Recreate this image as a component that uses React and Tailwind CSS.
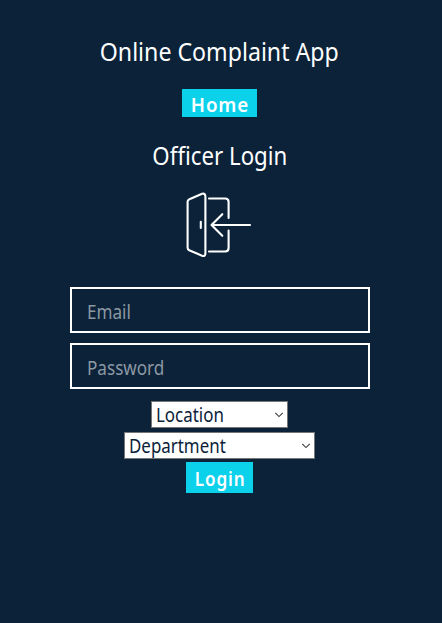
import React from "react";

function DoorIcon() {
  return (
    <svg
      className="mt-[22px] mr-[2px] h-[66px] w-[66px]"
      viewBox="0 0 66 66"
      fill="none"
      stroke="white"
      strokeWidth="2.1"
      strokeLinecap="round"
      strokeLinejoin="round"
      aria-hidden="true"
    >
      <path d="M3.4 7.2 16.1 1.8Q19.4 .9 19.4 4.8V61Q19.4 65 16.1 63.7L3.2 58.2Q1.6 57.5 1.6 55.8V9.6Q1.6 8 3.4 7.2Z" />
      <path d="M23 6.5H39.1Q42.6 6.5 42.6 10V26M42.6 38.5V56Q42.6 59.5 39.1 59.5H23" />
      <path d="M14.8 29.7V36" />
      <path d="M64 33H25.5M36.3 22.2 25.5 33 36.3 43.8" />
    </svg>
  );
}

function Field({ type, label, className }) {
  return (
    <div className={"h-[46px] w-[300px] border-2 border-white pr-[13px] pl-[15px] " + className}>
      <input
        type={type}
        placeholder={label}
        className="block h-full w-full origin-left scale-x-[.9] bg-transparent pt-[3px] text-[19px] text-white outline-none placeholder:text-[#8b98a3]"
      />
    </div>
  );
}

function Select({ label, className }) {
  return (
    <button
      type="button"
      className={"flex h-[27px] items-center justify-between border border-[#767676] bg-white pr-1 pl-[4px] text-[19px] leading-[25px] text-[#0b2239] " + className}
    >
      <span className="w-0 origin-left scale-x-[.89] pt-px whitespace-nowrap">{label}</span>
      <svg className="h-2 w-2" viewBox="0 0 8 8" fill="none" stroke="#444" strokeWidth="1.1" aria-hidden="true">
        <path d="m.3 2 3.7 3.6L7.7 2" />
      </svg>
    </button>
  );
}

export default function App() {
  return (
    <main className="flex h-[623px] w-full flex-col items-center overflow-hidden bg-[#0b2239] pr-[2px] font-['Noto_Sans',sans-serif] text-white">
      <h1 className="mt-[33px] mr-px scale-x-[.89] text-[26px] leading-9 font-normal whitespace-nowrap">Online Complaint App</h1>
      <button type="button" className="mt-5 mr-px flex h-[28px] w-[75px] justify-center bg-[#0cd1eb] pt-[4px] text-[20px] leading-6 font-semibold whitespace-nowrap">
        <span className="scale-x-[.94] tracking-[0.9px]">Home</span>
      </button>
      <h2 className="mt-[22px] mr-px mb-px h-[30px] scale-x-[.89] text-[25px] leading-8 font-normal whitespace-nowrap">Officer Login</h2>
      <DoorIcon />
      <form className="mt-[29px] flex flex-col items-center">
        <Field type="email" label="Email" className="" />
        <Field type="password" label="Password" className="mt-[10px]" />
        <Select label="Location" className="mt-3 mr-px w-[137px]" />
        <Select label="Department" className="mt-1 mr-px w-[191px]" />
        <button type="button" className="mt-[3px] mr-px flex h-[31px] w-[67px] justify-center bg-[#0cd1eb] pt-[3px] text-[19px] leading-7 font-semibold whitespace-nowrap">
          <span className="scale-x-[.9] pl-px tracking-[1px]">Login</span>
        </button>
      </form>
    </main>
  );
}
